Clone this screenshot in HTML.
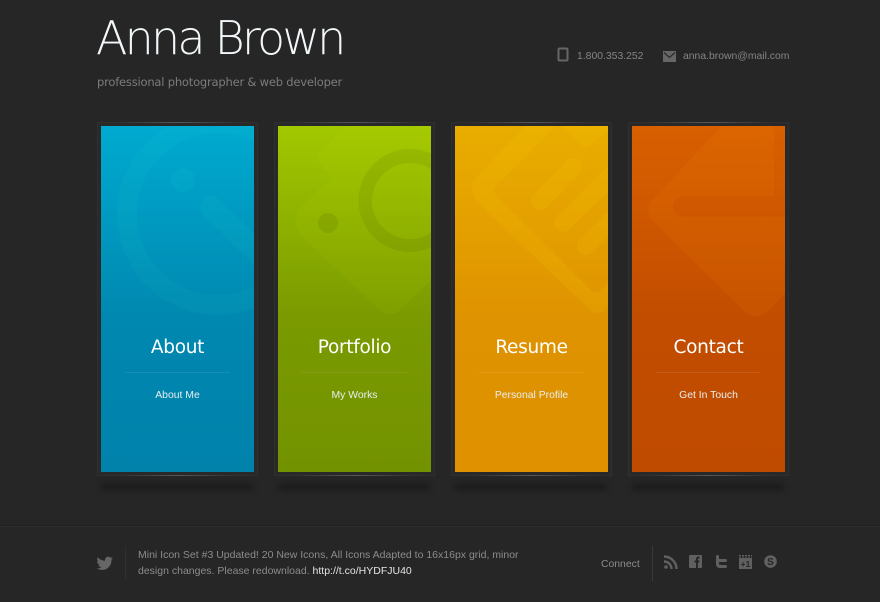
<!DOCTYPE html>
<html><head><meta charset="utf-8">
<style>
html,body{margin:0;padding:0;background:#262626;}
body{position:relative;width:880px;height:602px;overflow:hidden;font-family:"Liberation Sans",sans-serif;}
.t{position:absolute;white-space:nowrap;}
.frame{position:absolute;top:122px;width:159px;height:352px;background:#292929;border:1px solid #2f2f2f;box-sizing:content-box;}
.hl{position:absolute;top:122px;height:1px;width:120px;background:linear-gradient(90deg,rgba(120,130,140,0),rgba(130,140,150,.45) 50%,rgba(120,130,140,0));}
.shadow{position:absolute;top:484px;width:152px;height:6px;background:#1a1a1a;filter:blur(3px);}
.card{position:absolute;top:126px;width:153px;height:346px;display:block;}
.h{color:#fff;font-family:"DejaVu Sans",sans-serif;font-size:18.5px;letter-spacing:-.3px;text-align:center;width:153px;top:337px;}
.s{color:#e8eef0;font-size:10.4px;text-align:center;width:153px;top:390px;}
.l{position:absolute;top:372px;width:105px;height:1px;background:rgba(255,255,255,.08);}
svg{position:absolute;}
</style></head><body>
<div class="t" style="left:96px;top:11px;font-family:'DejaVu Sans',sans-serif;font-weight:200;font-size:46px;color:#f2f7fa;letter-spacing:-2.8px;">Anna Brown</div>
<div class="t" style="left:97px;top:75px;font-family:'DejaVu Sans',sans-serif;font-size:11.500px;letter-spacing:-.2px;color:#7c7c7c;">professional photographer &amp; web developer</div>

<svg style="left:557px;top:47px" width="12" height="15" viewBox="0 0 12 15"><rect x="1.500" y="1.500" width="9" height="12" rx="1" fill="none" stroke="#666" stroke-width="2"/></svg>
<div class="t" style="left:577px;top:51px;font-size:10.400px;color:#858585;">1.800.353.252</div>
<svg style="left:663px;top:51px" width="13" height="11" viewBox="0 0 13 11"><rect width="13" height="11" fill="#666"/><path d="M1 1.500L6.500 6.500L12 1.500" fill="none" stroke="#2a2a2a" stroke-width="1.200"/></svg>
<div class="t" style="left:683px;top:51px;font-size:10.400px;color:#858585;">anna.brown@mail.com</div>

<div class="frame" style="left:97px"></div><div class="frame" style="left:274px"></div><div class="frame" style="left:451px"></div><div class="frame" style="left:628px"></div>
<div class="hl" style="left:118px"></div><div class="hl" style="left:295px"></div><div class="hl" style="left:472px"></div><div class="hl" style="left:649px"></div>
<div class="hl" style="left:118px;top:475px"></div><div class="hl" style="left:295px;top:475px"></div><div class="hl" style="left:472px;top:475px"></div><div class="hl" style="left:649px;top:475px"></div>
<div class="shadow" style="left:101px"></div><div class="shadow" style="left:278px"></div><div class="shadow" style="left:455px"></div><div class="shadow" style="left:632px"></div>

<svg class="card" style="left:101px" viewBox="101 126 153 346">
<defs><linearGradient id="g1" x1="0" y1="0" x2="0" y2="1"><stop offset="0" stop-color="#00aad0"/><stop offset=".55" stop-color="#0088b0"/><stop offset="1" stop-color="#0082ab"/></linearGradient></defs>
<rect x="101" y="126" width="153" height="346" fill="url(#g1)"/>
<path fill-rule="evenodd" fill="#2fd" fill-opacity=".05" d="M218 113a101 101 0 1 0 .01 0ZM218 133a81 81 0 1 1-.01 0Z"/>
<circle cx="183" cy="180" r="12" fill="#2fd" fill-opacity=".06"/>
<path d="M211 207L275 270" stroke="#2fd" stroke-opacity=".05" stroke-width="22" stroke-linecap="round"/>
</svg>

<svg class="card" style="left:278px" viewBox="278 126 153 346">
<defs><linearGradient id="g2" x1="0" y1="0" x2="0" y2="1"><stop offset="0" stop-color="#a2c800"/><stop offset=".55" stop-color="#7a9a00"/><stop offset="1" stop-color="#739200"/></linearGradient></defs>
<rect x="278" y="126" width="153" height="346" fill="url(#g2)"/>
<path fill="#ff0" fill-opacity=".045" d="M345 126L319 154Q316 158 319 162L331.700 176.700L299 210Q291 222 301 236L381 311Q391 318 400 310L431 280V126Z"/>
<path fill-rule="evenodd" fill="#000" fill-opacity=".06" d="M410 149a51.500 51.500 0 1 0 .01 0ZM410 163a38 38 0 1 1-.01 0Z"/>
<circle cx="328" cy="223" r="10" fill="#000" fill-opacity=".07"/>
</svg>

<svg class="card" style="left:455px" viewBox="455 126 153 346">
<defs><linearGradient id="g3" x1="0" y1="0" x2="0" y2="1"><stop offset="0" stop-color="#e9ad00"/><stop offset=".55" stop-color="#df9300"/><stop offset="1" stop-color="#df9100"/></linearGradient></defs>
<rect x="455" y="126" width="153" height="346" fill="url(#g3)"/>
<path fill="#ffd800" fill-opacity=".11" d="M525 126L474 180Q468 192 478 203L590 310Q598 316 604 311L608 307V283L600 291Q596 294 592 291L495 194Q493 190 495 187L555 126Z"/>
<path fill="#ffd800" fill-opacity=".11" d="M562 126L582 146Q586 149 590 146L608 130V126Z"/>
<path d="M540 201L573 167M563 223L615 172M586 246L615 217" stroke="#ffd800" stroke-opacity=".11" stroke-width="18" stroke-linecap="round" fill="none"/>
</svg>

<svg class="card" style="left:632px" viewBox="632 126 153 346">
<defs><linearGradient id="g4" x1="0" y1="0" x2="0" y2="1"><stop offset="0" stop-color="#d96000"/><stop offset=".55" stop-color="#c24d00"/><stop offset="1" stop-color="#bf4b00"/></linearGradient></defs>
<rect x="632" y="126" width="153" height="346" fill="url(#g4)"/>
<path fill="#ff9a00" fill-opacity=".09" d="M722 126L651 201Q645 210 652 220L745 312Q757 320 767 312L785 293V217H683.500A10.500 10.500 0 0 1 683.500 196H774V126Z"/>
</svg>

<div class="t h" style="left:101px">About</div><div class="l" style="left:125px"></div><div class="t s" style="left:101px">About Me</div>
<div class="t h" style="left:278px">Portfolio</div><div class="l" style="left:302px"></div><div class="t s" style="left:278px">My Works</div>
<div class="t h" style="left:455px">Resume</div><div class="l" style="left:479px"></div><div class="t s" style="left:455px">Personal Profile</div>
<div class="t h" style="left:632px">Contact</div><div class="l" style="left:656px"></div><div class="t s" style="left:632px">Get In Touch</div>

<div style="position:absolute;left:0;top:526px;width:880px;height:1px;background:#2d2d2d;"></div>
<div style="position:absolute;left:0;top:525px;width:880px;height:1px;background:#202020;"></div>

<svg style="left:96px;top:556px" width="18" height="15" viewBox="0 0 18 15"><path fill="#666" d="M17 2.300l-1.900.3 1.300-1.700-1.900.8C13.200.4 11 .5 9.800 1.900 9 2.800 8.800 3.800 9 4.800 6.200 4.700 3.500 3.400 1.700 1.300.8 2.800 1.200 4.700 2.600 5.700l-1.600-.4c0 1.600 1.100 2.900 2.700 3.300l-1.500.1c.5 1.300 1.700 2.200 3.100 2.300-1.400 1.100-3.100 1.600-4.800 1.400C3.700 14 7.800 14.600 11 12.600c3-1.900 4.700-5.300 4.400-8.700z"/></svg>
<div style="position:absolute;left:125px;top:546px;width:1px;height:33px;background:#303030;"></div>
<div class="t" style="left:138px;top:547px;font-size:10.500px;line-height:16px;color:#8c8c8c;">Mini Icon Set #3 Updated! 20 New Icons, All Icons Adapted to 16x16px grid, minor<br>design changes. Please redownload. <span style="color:#e4e4e4">http://t.co/HYDFJU40</span></div>
<div class="t" style="left:601px;top:559px;font-size:10.400px;color:#8c8c8c;">Connect</div>
<div style="position:absolute;left:652px;top:546px;width:1px;height:35px;background:#383838;"></div>

<svg style="left:664px;top:555px" width="14" height="14" viewBox="0 0 14 14"><circle cx="2" cy="12" r="1.800" fill="#606060"/><path d="M0 6.500A7.500 7.500 0 0 1 7.500 14M0 1.500A12.500 12.500 0 0 1 12.500 14" fill="none" stroke="#606060" stroke-width="2.400"/></svg>
<svg style="left:689px;top:555px" width="13" height="13" viewBox="0 0 13 13"><rect width="13" height="13" rx="1" fill="#606060"/><path d="M7 13V7.500H5.500V5.500H7V4c0-1.700 1-2.500 2.300-2.500h1.200v2H9.600c-.5 0-.7.300-.7.700v1.300h1.600l-.3 2H8.900V13z" fill="#262626"/></svg>
<svg style="left:716px;top:555px" width="11" height="13" viewBox="0 0 11 13"><path fill="#606060" d="M0 1.500A1.500 1.500 0 0 1 3 1.500V4H9.500A1.500 1.500 0 0 1 9.500 7H3V8.500C3 9.500 3.500 10 4.500 10H9.500A1.500 1.500 0 0 1 9.500 13H4C1.500 13 0 11.500 0 9Z"/></svg>
<svg style="left:739px;top:555px" width="13" height="14" viewBox="0 0 13 14"><path d="M0 .5H13M0 2H13" stroke="#606060" stroke-dasharray="2 1"/><rect y="3" width="13" height="11" fill="#606060"/><text x="6.500" y="12" font-family="Liberation Sans" font-size="8.500" font-weight="700" text-anchor="middle" fill="#262626">+1</text></svg>
<svg style="left:764px;top:555px" width="13" height="13" viewBox="0 0 13 13"><circle cx="6.500" cy="6.500" r="6.300" fill="#606060"/><text x="6.500" y="10" font-family="Liberation Sans" font-size="10" font-weight="700" text-anchor="middle" fill="#262626">S</text></svg>
</body></html>
